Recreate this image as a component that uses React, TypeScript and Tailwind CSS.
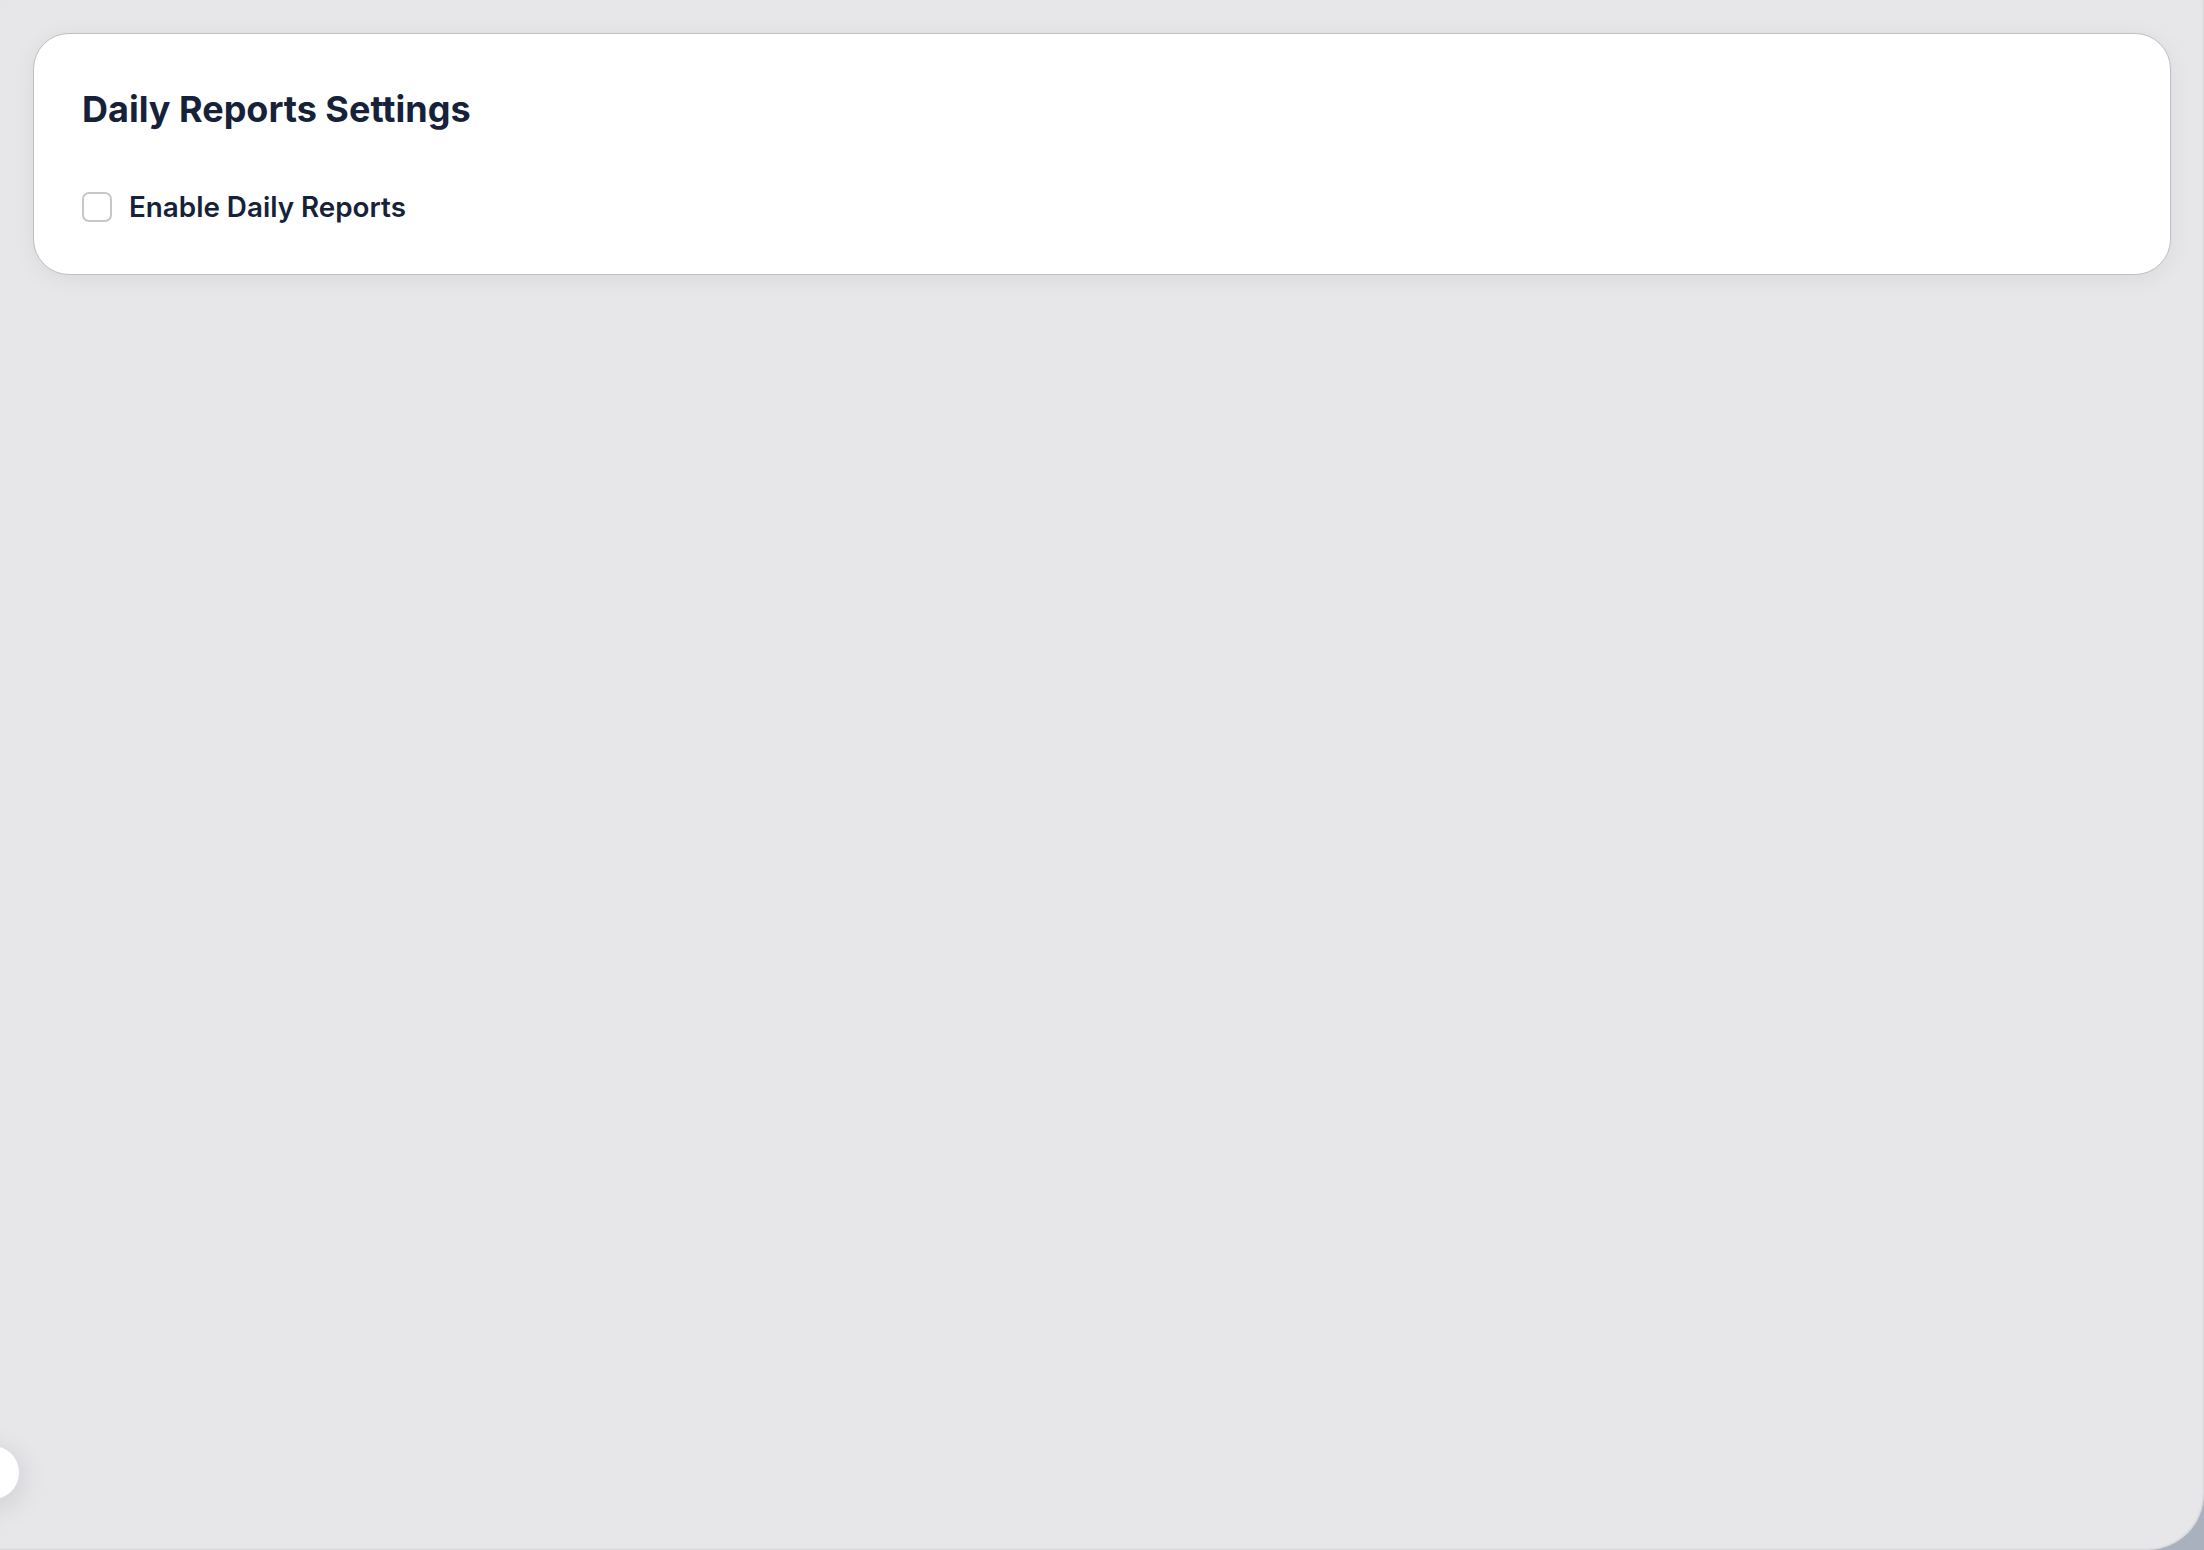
import React from 'react';

export default function App() {
  return (
    <div className="min-h-[1550px] bg-[#a9b1be]" style={{ fontFamily: 'Inter, "Noto Sans", sans-serif' }}>
      <div className="relative h-[1550px] overflow-hidden rounded-br-[56px] bg-[#e7e7ea] px-[33px] pt-[33px] shadow-[inset_-1px_-1px_2px_rgba(0,0,0,0.08)]">
        <section className="rounded-[36px] border-[1.5px] border-[#bebec4] bg-white pb-[46px] pl-[48px] pr-[48px] pt-[51px] shadow-[0_4px_24px_rgba(0,0,0,0.06)]">
          <h2 className="text-[36px] font-bold leading-[48px] text-[#15223a]">Daily Reports Settings</h2>
          <label className="mt-[53px] flex items-center gap-[17px]">
            <input
              type="checkbox"
              className="h-[30px] w-[30px] appearance-none rounded-[7px] border-2 border-[#c6c6cb] bg-white"
            />
            <span className="text-[27.8px] font-semibold leading-[42px] text-[#15223a]">Enable Daily Reports</span>
          </label>
        </section>
        <button
          aria-label="open"
          className="absolute left-[-35px] top-[1445px] h-[55px] w-[55px] rounded-full border border-[#d5dfee] bg-white shadow-[0_6px_30px_rgba(0,0,0,0.12)]"
        />
      </div>
    </div>
  );
}
